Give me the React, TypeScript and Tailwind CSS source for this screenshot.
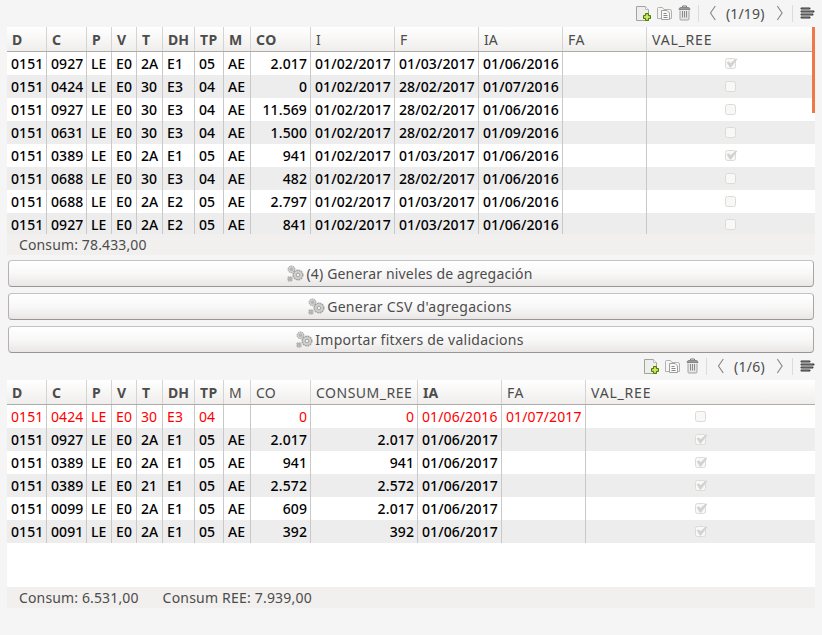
import React from "react";

type Column = { name: string; width: string; pad: string; bold?: boolean; track?: string; kind?: "num" | "check" };

const shared: Column[] = [
  { name: "D", width: "w-[40px]", pad: "pl-1", bold: true },
  { name: "C", width: "w-[40px]", pad: "pl-1", bold: true },
  { name: "P", width: "w-[25px]", pad: "pl-1", bold: true },
  { name: "V", width: "w-[25px]", pad: "pl-1", bold: true },
  { name: "T", width: "w-[26px]", pad: "pl-1", bold: true },
  { name: "DH", width: "w-[32px]", pad: "pl-1", bold: true },
  { name: "TP", width: "w-[29px]", pad: "pl-1", bold: true, track: "tracking-[0.4px]" },
];

const topColumns: Column[] = [
  ...shared,
  { name: "M", width: "w-[27px]", pad: "pl-1", bold: true },
  { name: "CO", width: "w-[60px]", pad: "pr-[3px]", bold: true, track: "tracking-[0.5px]", kind: "num" },
  { name: "I", width: "w-[84px]", pad: "pl-1" },
  { name: "F", width: "w-[84px]", pad: "pl-1" },
  { name: "IA", width: "w-[84px]", pad: "pl-1" },
  { name: "FA", width: "w-[84px]", pad: "pl-1", track: "tracking-[0.6px]" },
  { name: "VAL_REE", width: "w-[168px]", pad: "", track: "tracking-[0.8px]", kind: "check" },
];

const bottomColumns: Column[] = [
  ...shared,
  { name: "M", width: "w-[27px]", pad: "pl-1" },
  { name: "CO", width: "w-[60px]", pad: "pr-[3px]", track: "tracking-[0.3px]", kind: "num" },
  { name: "CONSUM_REE", width: "w-[107px]", pad: "pr-[3px]", track: "tracking-[0.5px]", kind: "num" },
  { name: "IA", width: "w-[84px]", pad: "pl-1", bold: true },
  { name: "FA", width: "w-[84px]", pad: "pl-1", track: "tracking-[0.6px]" },
  { name: "VAL_REE", width: "w-[230px]", pad: "", track: "tracking-[0.8px]", kind: "check" },
];

const topRows = [
  "0151|0927|LE|E0|2A|E1|05|AE|2.017|01/02/2017|01/03/2017|01/06/2016||x",
  "0151|0424|LE|E0|30|E3|04|AE|0|01/02/2017|28/02/2017|01/07/2016||",
  "0151|0927|LE|E0|30|E3|04|AE|11.569|01/02/2017|28/02/2017|01/06/2016||",
  "0151|0631|LE|E0|30|E3|04|AE|1.500|01/02/2017|28/02/2017|01/09/2016||",
  "0151|0389|LE|E0|2A|E1|05|AE|941|01/02/2017|01/03/2017|01/06/2016||x",
  "0151|0688|LE|E0|30|E3|04|AE|482|01/02/2017|28/02/2017|01/06/2016||",
  "0151|0688|LE|E0|2A|E2|05|AE|2.797|01/02/2017|01/03/2017|01/06/2016||",
  "0151|0927|LE|E0|2A|E2|05|AE|841|01/02/2017|01/03/2017|01/06/2016||",
].map((r) => r.split("|"));

const bottomRows = [
  "0151|0424|LE|E0|30|E3|04||0|0|01/06/2016|01/07/2017|",
  "0151|0927|LE|E0|2A|E1|05|AE|2.017|2.017|01/06/2017||x",
  "0151|0389|LE|E0|2A|E1|05|AE|941|941|01/06/2017||x",
  "0151|0389|LE|E0|21|E1|05|AE|2.572|2.572|01/06/2017||x",
  "0151|0099|LE|E0|2A|E1|05|AE|609|2.017|01/06/2017||x",
  "0151|0091|LE|E0|2A|E1|05|AE|392|392|01/06/2017||x",
].map((r) => r.split("|"));

function Check({ on }: { on: boolean }) {
  return (
    <svg width="14" height="13" viewBox="0 0 14 13" className="block shrink-0">
      <rect x="1.5" y="1.5" width="10" height="10" rx="2" fill="#f8f8f7" stroke="#dcdbd9" />
      {on && <path d="M2.6 5.2 L5 4.4 L6.6 6.2 L11.8 1.4 L13.4 2 L7 10.6 L5.8 10.6 Z" fill="#d3d2d0" />}
    </svg>
  );
}

function Table({ columns, rows, redFirst }: { columns: Column[]; rows: string[][]; redFirst?: boolean }) {
  return (
    <>
      <div className="flex h-[25px] shrink-0 border-b border-[#aeaca9] bg-linear-to-b from-white to-[#efeeec]">
        {columns.map((c, i) => (
          <div
            key={i}
            className={`${c.width} flex shrink-0 items-center whitespace-nowrap border-r border-[#d6d4d2] pl-[5px] pt-[2px] text-[14px] leading-[22px] text-[#4c4c4c] ${c.bold ? "font-bold" : ""} ${c.track ?? ""}`}
          >
            {c.name}
          </div>
        ))}
      </div>
      {rows.map((row, r) => (
        <div key={r} className={`flex h-[23px] shrink-0 ${r % 2 ? "bg-[#ededed]" : "bg-white"} ${redFirst && r === 0 ? "font-normal text-[#ff0000]" : "font-medium text-black"}`}>
          {columns.map((c, i) => (
            <div
              key={i}
              className={`${c.width} ${c.pad} flex shrink-0 items-center whitespace-nowrap text-[14px] leading-[22px] tracking-[0.11px] ${c.kind === "num" ? "justify-end" : ""} ${c.kind === "check" ? "justify-center" : "border-r border-[#c9c9c9] pt-px"}`}
            >
              {c.kind === "check" ? <Check on={row[i] === "x"} /> : row[i]}
            </div>
          ))}
        </div>
      ))}
    </>
  );
}

function Toolbar({ page, wide }: { page: string; wide?: boolean }) {
  return (
    <div className="flex h-[27px] shrink-0 items-center justify-end pb-px pr-[7px] text-[#4c4c4c]">
      <svg width="15" height="17" viewBox="0 0 15 17" className="shrink-0">
        <path d="M.5 1.5 H9.5 L12.5 4.5 V15.5 H.5 Z" fill="#eeeeed" stroke="#a3a29f" />
        <path d="M9.5 1.5 V4.5 H12.5" fill="#fff" stroke="#bdbcb9" />
        <path d="M9.5 8.5 h3 v2 h2 v3 h-2 v2 h-3 v-2 h-2 v-3 h2 Z" fill="#a6cf2b" stroke="#4d7a05" />
        <path d="M11 9.5 v5 M8.5 12 h5" stroke="#dcf08b" />
      </svg>
      <svg width="17" height="15" viewBox="0 0 17 15" className="ml-[5px] shrink-0" fill="none">
        <path d="M5.5 12.5 H1.5 V2.5 Q1.5 1.5 2.5 1.5 H6.5 L8 3.5 H13.5 Q15.5 3.5 15.5 5 V12.5 H13.5" stroke="#b2b1ae" />
        <path d="M5.5 4.5 H11 L13.5 7 V13.5 H5.5 Z" fill="#fafafa" stroke="#a2a19e" />
        <path d="M7.5 7.5 h3 M7.5 9.5 h4 M7.5 11.5 h4" stroke="#888" />
      </svg>
      <svg width="13" height="16" viewBox="0 0 13 16" className="ml-[5px] shrink-0" fill="none">
        <path d="M4.5 2.5 V1 H8.5 V2.5" stroke="#777" />
        <path d="M1 4.5 Q1 2.5 3 2.5 H10 Q12 2.5 12 4.5 Z" fill="#999" stroke="#888" />
        <path d="M2 5.5 V14 Q2 15 3 15 H10 Q11 15 11 14 V5.5" fill="#e5e5e4" stroke="#a3a3a3" />
        <path d="M4.5 6 V12.5 M6.5 6 V12.5 M8.5 6 V12.5" stroke="#8b8b8b" />
      </svg>
      <div className="ml-[7px] h-[17px] w-px bg-[#dcdcdc]" />
      <svg width="8" height="16" viewBox="0 0 8 16" className="ml-[10px] shrink-0" fill="none">
        <path d="M6.3 1 L1.5 8 L6.3 15" stroke="#858585" strokeWidth="1.1" />
      </svg>
      <div className={`${wide ? "w-[60px]" : "w-[52px]"} shrink-0 whitespace-nowrap pl-[9px] text-[14px]`}>
        <span className={wide ? "tracking-[0.15px]" : "tracking-[0.3px]"}>{page}</span>
      </div>
      <svg width="8" height="16" viewBox="0 0 8 16" className="shrink-0" fill="none">
        <path d="M.3 1 L5.1 8 L.3 15" stroke="#858585" strokeWidth="1.1" />
      </svg>
      <div className="ml-[7px] h-[17px] w-px bg-[#dcdcdc]" />
      <svg width="15" height="12" viewBox="0 0 15 12" className="ml-[7px] shrink-0">
        <path d="M1.5 1.5 H9.5 M1.5 4.5 H13.5 M1.5 7.5 H12.5 M1.5 10.5 H9.5" stroke="#333" strokeWidth="2" strokeLinecap="round" />
        <path d="M1.5 1.5 H9.5 M1.5 4.5 H13 M1.5 7.5 H12 M1.5 10.5 H9" stroke="#777" strokeWidth=".6" />
      </svg>
    </div>
  );
}

function Gears() {
  return (
    <svg width="17" height="17" viewBox="0 0 17 17" className="shrink-0">
      <g fill="#d0d0ce" stroke="#a3a3a1">
        <circle cx="4.5" cy="4.3" r="3.4" strokeDasharray="1.5 .6" />
        <circle cx="4.5" cy="4.3" r="1.7" fill="#b5b5b3" stroke="none" />
        <path d="M1 12 h4 v4 h-4 Z M1 14 h4 M3 12 v4" strokeDasharray="1.5 .6" />
        <circle cx="11" cy="10" r="4.8" strokeWidth="1.5" strokeDasharray="1.9 .6" />
        <circle cx="11" cy="10" r="1.8" fill="#f1f1f0" />
      </g>
    </svg>
  );
}

function Action({ label, track }: { label: string; track: string }) {
  return (
    <button className="flex h-[27px] w-full shrink-0 items-center justify-center rounded-[4px] border border-t-[#c4c3c1] border-r-[#a9a7a5] border-b-[#989694] border-l-[#b4b2b0] bg-linear-to-b from-white via-[#f9f8f8] to-[#e9e7e6] pr-[2px] text-[14px] text-[#4c4c4c]">
      <Gears />
      <span className={`ml-[2px] whitespace-nowrap ${track}`}>{label}</span>
    </button>
  );
}

export default function App() {
  return (
    <div className="flex h-[635px] w-[822px] flex-col overflow-hidden bg-[#f5f5f5] font-['Noto_Sans','Open_Sans',sans-serif]">
      <Toolbar page="(1/19)" wide />
      <section className="relative ml-[7px] flex h-[228px] w-[808px] shrink-0 flex-col overflow-hidden">
        <div className="flex h-[207px] shrink-0 flex-col overflow-hidden">
          <Table columns={topColumns} rows={topRows} />
        </div>
        <div className="flex h-[21px] shrink-0 items-center bg-[#f1f0ee] pl-[12px] text-[14px] text-[#4c4c4c]">
          <span className="tracking-[0.13px]">Consum: 78.433,00</span>
        </div>
        <div className="absolute right-0 top-0 h-[86px] w-[3px] bg-[#f07746]" />
      </section>
      <div className="ml-[8px] mt-[5px] flex w-[806px] shrink-0 flex-col gap-[6px]">
        <Action label="(4) Generar niveles de agregación" track="tracking-[0.17px]" />
        <Action label="Generar CSV d'agregacions" track="tracking-[0.28px]" />
        <Action label="Importar fitxers de validacions" track="tracking-[0.25px]" />
      </div>
      <Toolbar page="(1/6)" />
      <section className="ml-[7px] flex h-[228px] w-[808px] shrink-0 flex-col overflow-hidden">
        <div className="flex h-[207px] shrink-0 flex-col bg-white">
          <Table columns={bottomColumns} rows={bottomRows} redFirst />
        </div>
        <div className="flex h-[21px] shrink-0 items-center gap-[24px] bg-[#f1f0ee] pl-[12px] text-[14px] text-[#4c4c4c]">
          <span className="tracking-[0.14px]">Consum: 6.531,00</span>
          <span className="tracking-[0.2px]">Consum REE: 7.939,00</span>
        </div>
      </section>
    </div>
  );
}
